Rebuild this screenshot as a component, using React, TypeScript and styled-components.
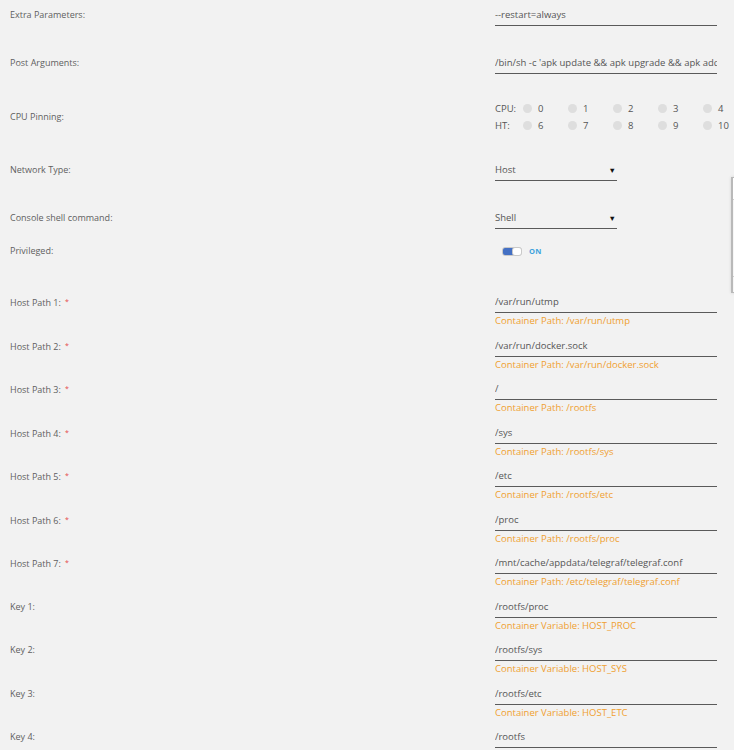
import React, { useState } from 'react'
import styled, { createGlobalStyle } from 'styled-components'

const GlobalStyle = createGlobalStyle`
  html, body {
    margin: 0;
    padding: 0;
    background: #f2f2f2;
    overflow: hidden;
  }
  body {
    font-family: 'Open Sans', 'Liberation Sans', sans-serif;
  }
`

type PathField = {
  label: string
  value: string
  hint?: string
  required?: boolean
}

const paths: PathField[] = [
  { label: 'Host Path 1:', value: '/var/run/utmp', hint: 'Container Path: /var/run/utmp', required: true },
  { label: 'Host Path 2:', value: '/var/run/docker.sock', hint: 'Container Path: /var/run/docker.sock', required: true },
  { label: 'Host Path 3:', value: '/', hint: 'Container Path: /rootfs', required: true },
  { label: 'Host Path 4:', value: '/sys', hint: 'Container Path: /rootfs/sys', required: true },
  { label: 'Host Path 5:', value: '/etc', hint: 'Container Path: /rootfs/etc', required: true },
  { label: 'Host Path 6:', value: '/proc', hint: 'Container Path: /rootfs/proc', required: true },
  {
    label: 'Host Path 7:',
    value: '/mnt/cache/appdata/telegraf/telegraf.conf',
    hint: 'Container Path: /etc/telegraf/telegraf.conf',
    required: true,
  },
  { label: 'Key 1:', value: '/rootfs/proc', hint: 'Container Variable: HOST_PROC' },
  { label: 'Key 2:', value: '/rootfs/sys', hint: 'Container Variable: HOST_SYS' },
  { label: 'Key 3:', value: '/rootfs/etc', hint: 'Container Variable: HOST_ETC' },
  { label: 'Key 4:', value: '/rootfs' },
]

const cpus = [0, 1, 2, 3, 4]
const threads = [6, 7, 8, 9, 10]

const CpuPinning = () => (
  <CpuGrid>
    <CpuTag>CPU:</CpuTag>
    {cpus.map((n) => (
      <CpuCell key={`cpu-${n}`}>
        <Dot />
        {n}
      </CpuCell>
    ))}
    <CpuTag>HT:</CpuTag>
    {threads.map((n) => (
      <CpuCell key={`ht-${n}`}>
        <Dot />
        {n}
      </CpuCell>
    ))}
  </CpuGrid>
)

const App = () => {
  const [privileged, setPrivileged] = useState(true)

  return (
    <Page>
      <GlobalStyle />
      <Row $h={48}>
        <Label>Extra Parameters:</Label>
        <TextInput readOnly defaultValue="--restart=always" />
      </Row>
      <Row $h={48}>
        <Label>Post Arguments:</Label>
        <TextInput readOnly defaultValue="/bin/sh -c 'apk update && apk upgrade && apk add ca-certificates'" />
      </Row>
      <Row $h={59} $center>
        <Label>CPU Pinning:</Label>
        <CpuPinning />
      </Row>
      <Row $h={48}>
        <Label>Network Type:</Label>
        <Select>
          Host
          <Arrow>▼</Arrow>
        </Select>
      </Row>
      <Row $h={33}>
        <Label>Console shell command:</Label>
        <Select>
          Shell
          <Arrow>▼</Arrow>
        </Select>
      </Row>
      <Row $h={51}>
        <Label>Privileged:</Label>
        <SwitchLine onClick={() => setPrivileged(!privileged)}>
          <Track $on={privileged}>
            <Knob />
          </Track>
          <SwitchText>{privileged ? 'ON' : 'OFF'}</SwitchText>
        </SwitchLine>
      </Row>
      {paths.map((p) => (
        <Row key={p.label} $h={43.5}>
          <Label>
            {p.label}
            {p.required && <Required>*</Required>}
          </Label>
          <div>
            <TextInput readOnly defaultValue={p.value} />
            {p.hint && <Hint>{p.hint}</Hint>}
          </div>
        </Row>
      ))}
      <Popover>
        <PopoverHead />
        <PopoverBody />
      </Popover>
    </Page>
  )
}

// Styled components
const Page = styled.div`
  position: relative;
  padding-left: 10px;
  width: 724px;
  color: #5f5f5f;
  font-size: 9px;
`

const Row = styled.div<{ $h: number; $center?: boolean }>`
  display: grid;
  grid-template-columns: 485px 222px;
  align-content: start;
  align-items: ${({ $center }) => ($center ? 'center' : 'start')};
  box-sizing: border-box;
  height: ${({ $h }) => $h}px;
  padding-top: ${({ $center }) => ($center ? '4px' : '8px')};
`

const Label = styled.div`
  line-height: 14px;
  font-size: 9px;
  color: #5f5f5f;
  white-space: nowrap;
`

const Required = styled.span`
  color: #e54848;
  font-size: 7px;
  margin-left: 4px;
  vertical-align: 2px;
`

const TextInput = styled.input`
  display: block;
  box-sizing: content-box;
  width: 222px;
  height: 14px;
  margin: 0;
  padding: 0 0 3px;
  border: none;
  border-bottom: 1px solid #5a5a5a;
  background: transparent;
  font-family: 'Open Sans', 'Liberation Sans', sans-serif;
  font-size: 9.5px;
  line-height: 14px;
  color: #555;
  outline: none;
`

const Hint = styled.div`
  margin-top: 1px;
  line-height: 14px;
  font-size: 9.5px;
  color: #f0a030;
  white-space: nowrap;
`

const Select = styled.div`
  display: flex;
  justify-content: space-between;
  align-items: center;
  width: 122px;
  height: 14px;
  padding-bottom: 3px;
  border-bottom: 1px solid #5a5a5a;
  line-height: 14px;
  font-size: 9.5px;
  color: #555;
  cursor: pointer;
`

const Arrow = styled.span`
  font-size: 7.5px;
  color: #111;
  margin-right: 1px;
`

const CpuGrid = styled.div`
  display: grid;
  grid-template-columns: 28px repeat(5, 45px);
  grid-auto-rows: 17px;
  align-items: center;
  color: #555;
  font-size: 9.5px;
`

const CpuTag = styled.span`
  line-height: 17px;
`

const CpuCell = styled.label`
  display: flex;
  align-items: center;
  gap: 6px;
  line-height: 17px;
`

const Dot = styled.span`
  width: 9px;
  height: 9px;
  border-radius: 50%;
  background: #dedede;
`

const SwitchLine = styled.div`
  display: flex;
  align-items: center;
  gap: 7px;
  height: 14px;
  padding-left: 7px;
  cursor: pointer;
`

const Track = styled.span<{ $on: boolean }>`
  position: relative;
  display: block;
  box-sizing: border-box;
  width: 20px;
  height: 9px;
  border-radius: 3px;
  border: 1px solid #c9c9c9;
  background: ${({ $on }) => ($on ? 'linear-gradient(90deg, #4470c4 55%, #fff 55%)' : '#fff')};
`

const Knob = styled.span`
  position: absolute;
  top: -1px;
  right: -1px;
  box-sizing: border-box;
  width: 10px;
  height: 9px;
  border-radius: 3px;
  border: 1px solid #c9c9c9;
  background: #fff;
`

const SwitchText = styled.span`
  font-size: 7.5px;
  font-weight: 700;
  color: #3ea3dd;
  letter-spacing: 0.3px;
`

const Popover = styled.div`
  position: absolute;
  top: 177px;
  left: 731px;
  width: 220px;
  height: 116px;
  box-sizing: border-box;
  border: 1px solid #b9b9b9;
  border-left-width: 2px;
  background: #f6f6f6;
  box-shadow: 0 0 3px rgba(0, 0, 0, 0.12);
`

const PopoverHead = styled.div`
  height: 21px;
  background: #fff;
  border-bottom: 1px solid #cfcfcf;
`

const PopoverBody = styled.div`
  height: 76px;
  border-bottom: 1px solid #cfcfcf;
`

export default App
